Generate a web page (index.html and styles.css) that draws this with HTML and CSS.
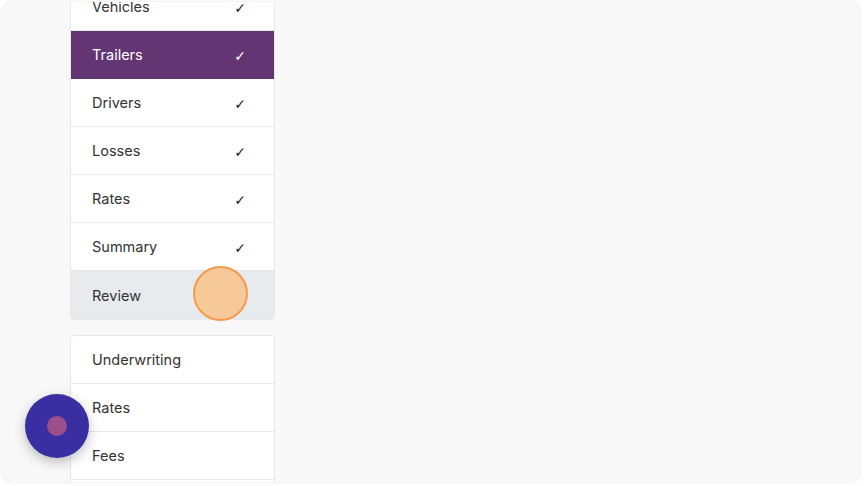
FILE: index.html
```html
<!DOCTYPE html>
<html lang="en">
<head>
  <meta charset="UTF-8"/>
  <title>Quote Steps</title>
  <link rel="stylesheet" href="styles.css">
</head>
<body>
  <div class="screen">
    <main class="content">
      <nav class="steps">
        <div class="step"><span>Vehicles</span><span class="check">✓</span></div>
        <div class="step active"><span>Trailers</span><span class="check">✓</span></div>
        <div class="step"><span>Drivers</span><span class="check">✓</span></div>
        <div class="step"><span>Losses</span><span class="check">✓</span></div>
        <div class="step"><span>Rates</span><span class="check">✓</span></div>
        <div class="step"><span>Summary</span><span class="check">✓</span></div>
        <div class="step current"><span>Review</span></div>
      </nav>

      <nav class="steps">
        <div class="step"><span>Underwriting</span></div>
        <div class="step"><span>Rates</span></div>
        <div class="step"><span>Fees</span></div>
        <div class="step"><span>Documents</span></div>
      </nav>
    </main>

    <!-- click marker -->
    <div class="click-dot"></div>

    <button class="fab"><span class="fab-dot"></span></button>
  </div>
</body>
</html>
```

FILE: styles.css
```css
* { box-sizing:border-box; margin:0; padding:0; }
html, body { height:100%; }
body {
  background:#fff;
  font-family: Inter, "Noto Sans", sans-serif;
  color:#333;
  padding:2px 8px 4px 2px;
}
.screen {
  position:relative;
  height:100%;
  background:#f8f8f8;
  border-radius:10px;
  box-shadow:0 0 3px rgba(0,0,0,0.12);
  overflow:hidden;
}
.content {
  padding-left:68px;
  margin-top:-20px;
  display:flex; flex-direction:column; gap:15px;
}
.steps {
  width:205px;
  background:#fff;
  border:1px solid #e6e7ea;
  border-radius:4px;
  overflow:hidden;
}
.step {
  height:48px;
  display:flex; align-items:center; justify-content:space-between;
  padding:0 28px 0 21px;
  font-size:14.5px;
  border-bottom:1px solid #e6e7ea;
}
.step:last-child { border-bottom:none; }
.step .check { font-size:14px; margin-top:3px; color:#222; font-family:"DejaVu Sans", sans-serif; }
.step.active {
  background:#633572; color:#fff;
  margin:0 -1px; padding:0 29px 0 22px;
  border-bottom-color:#633572;
}
.step.active .check { color:#fff; }
.step.current { background:#e8ebee; }
.click-dot {
  position:absolute; left:191px; top:264px;
  width:55px; height:55px; border-radius:50%;
  background:#f7c898; border:2px solid #f59a4c;
}
.fab {
  position:absolute; left:23px; top:392px;
  width:64px; height:64px; border-radius:50%;
  border:none; background:#3a2fa2;
  box-shadow:0 4px 12px rgba(0,0,0,0.25);
  display:flex; align-items:center; justify-content:center;
}
.fab-dot {
  width:20px; height:20px; border-radius:50%;
  background:#9c4f88;
}
```
